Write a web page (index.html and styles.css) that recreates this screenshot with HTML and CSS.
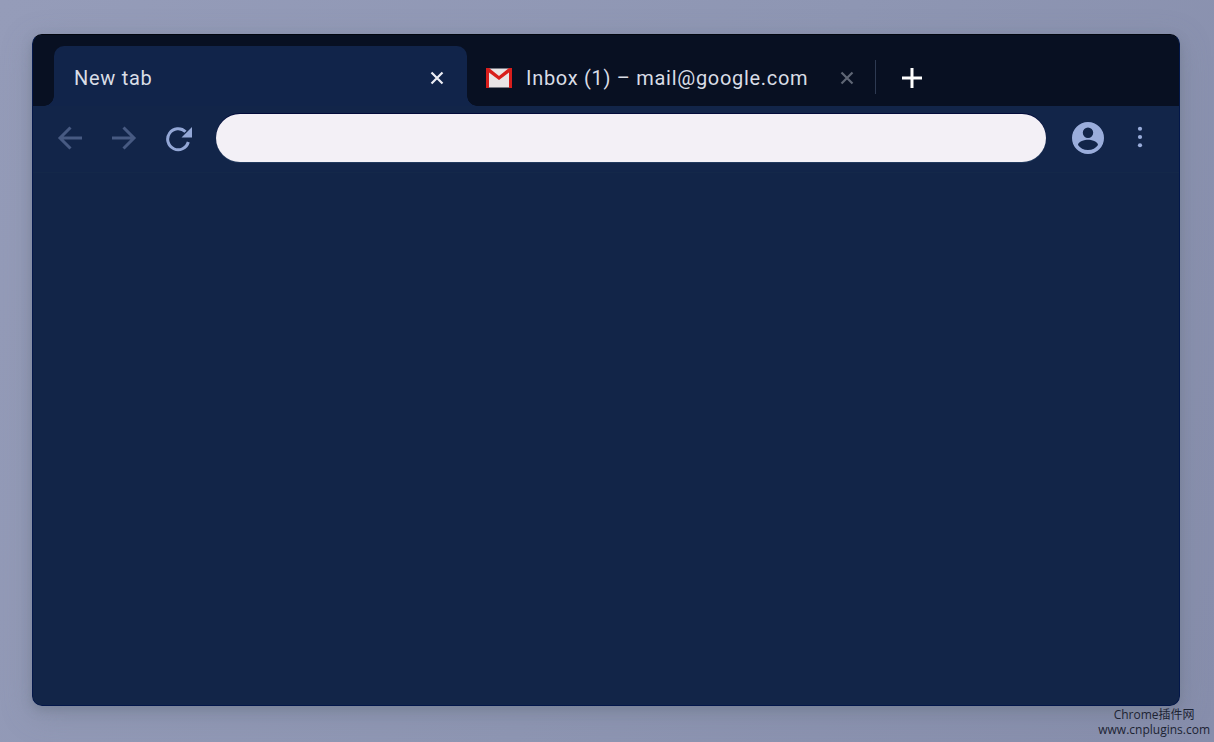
FILE: index.html
```html
<!DOCTYPE html>
<html lang="en">
<head>
<meta charset="utf-8">
<title>New tab</title>
<link rel="stylesheet" href="styles.css">
</head>
<body>
<main class="window">
  <header class="strip">
    <div class="tab tab-active">
      <span class="tab-title">New tab</span>
      <svg class="tab-close" viewBox="0 0 16 16"><path d="M2.500 2.500l11 11M13.500 2.500l-11 11"/></svg>
    </div>
    <div class="tab tab-idle">
      <svg class="gmail" viewBox="0 0 26 20">
        <rect x="0.500" y="0.500" width="25" height="19" fill="#e9e4e6"/>
        <path d="M0 0h3l10 8 10-8h3v20h-3V4.500l-10 7.500L3 4.500V20H0z" fill="#d81e1c"/>
      </svg>
      <span class="tab-title">Inbox (1) – mail@google.com</span>
      <svg class="tab-close tab-close-dim" viewBox="0 0 16 16"><path d="M2.500 2.500l11 11M13.500 2.500l-11 11"/></svg>
    </div>
    <span class="divider"></span>
    <svg class="plus" viewBox="0 0 22 22"><path d="M11 1v20M1 11h20"/></svg>
  </header>
  <nav class="toolbar">
    <svg class="icon icon-dim" viewBox="0 0 28 28"><path d="M26 14H4M14.500 3.500L4 14l10.500 10.500"/></svg>
    <svg class="icon icon-dim" viewBox="0 0 28 28"><path d="M2 14h22M13.500 3.500L24 14 13.500 24.500"/></svg>
    <svg class="icon icon-reload" viewBox="0 0 28 28"><path class="reload-arc" d="M24.300 18A10.500 10.500 0 1 1 21.500 7.700"/><path class="reload-head" d="M28 3v10.500H17.500z"/></svg>
    <div class="omnibox"></div>
    <svg class="account" viewBox="0 0 32 32"><path fill-rule="evenodd" d="M16 0a16 16 0 1 0 0 32 16 16 0 0 0 0-32zm0 5.500a5.200 5.200 0 1 1 0 10.400 5.200 5.200 0 0 1 0-10.400zm0 22.500c-4.300 0-8-2.100-10-5.100 0-3.300 6.700-5.100 10-5.100s10 1.800 10 5.100c-2 3-5.700 5.100-10 5.100z"/></svg>
    <svg class="dots" viewBox="0 0 6 24"><circle cx="3" cy="3" r="2.300"/><circle cx="3" cy="12" r="2.300"/><circle cx="3" cy="21" r="2.300"/></svg>
  </nav>
  <section class="page"></section>
</main>
<footer class="watermark">Chrome插件网<br>www.cnplugins.com</footer>
</body>
</html>
```
FILE: styles.css
```css
* { box-sizing: border-box; }
html, body { height: 100%; }
body {
  margin: 0;
  padding: 34px 34px 0 32px;
  overflow: hidden;
  background: linear-gradient(115deg, #959cb9 0%, #8e96b3 55%, #878eac 100%);
  font-family: Roboto, "Noto Sans", sans-serif;
}
.window {
  width: 1148px;
  height: 672px;
  display: flex;
  flex-direction: column;
  border-radius: 10px;
  overflow: hidden;
  background: #122548;
  border: 1px solid #03174a;
  border-top-color: #02060f;
}
body::before {
  content: "";
  position: absolute;
  left: 32px;
  top: 34px;
  width: 1148px;
  height: 672px;
  border-radius: 10px;
  box-shadow: 0 4px 10px rgba(110, 122, 140, .55), 0 8px 30px rgba(110, 118, 135, .35);
}
.strip {
  flex: none;
  height: 71px;
  display: flex;
  align-items: flex-end;
  padding-left: 21px;
  background: #081022;
}
.tab {
  height: 60px;
  display: flex;
  align-items: center;
  position: relative;
  color: #d9dde6;
  font-size: 20px;
  letter-spacing: .7px;
}
.tab-title { white-space: nowrap; }
.tab-active {
  width: 413px;
  padding: 4px 22px 0 20px;
  justify-content: space-between;
  background: #11244a;
  border-radius: 10px 10px 0 0;
}
.tab-active::before,
.tab-active::after {
  content: "";
  position: absolute;
  bottom: 0;
  width: 10px;
  height: 10px;
}
.tab-active::before {
  left: -10px;
  background: radial-gradient(circle at 0 0, transparent 9.500px, #11244a 10px);
}
.tab-active::after {
  right: -10px;
  background: radial-gradient(circle at 100% 0, transparent 9.500px, #11244a 10px);
}
.tab-close {
  flex: none;
  width: 16px;
  height: 16px;
  fill: none;
  stroke: #ecedf4;
  stroke-width: 2.200;
}
.tab-close-dim { stroke: #5f6675; margin-left: 31px; }
.tab-idle {
  width: 408px;
  padding: 4px 0 0 19px;
}
.gmail {
  flex: none;
  width: 26px;
  height: 20px;
  margin-right: 14px;
}
.divider {
  align-self: center;
  width: 1px;
  height: 34px;
  margin-top: 12px;
  background: #2e3a52;
}
.plus {
  align-self: center;
  width: 22px;
  height: 22px;
  margin: 14px 0 0 25px;
  fill: none;
  stroke: #fff;
  stroke-width: 3;
}
.toolbar {
  flex: none;
  height: 67px;
  display: flex;
  align-items: flex-start;
  padding: 8px 0 0 23px;
  background: #122549;
  border-bottom: 1px solid #142849;
}
.icon {
  flex: none;
  width: 28px;
  height: 28px;
  margin: 10px 26px 0 0;
  fill: none;
}
.icon-dim path {
  stroke: #475a82;
  stroke-width: 3;
}
.icon-reload { margin-right: 24px; }
.reload-arc { stroke: #93a7d6; stroke-width: 3; }
.reload-head { fill: #93a7d6; }
.omnibox {
  flex: none;
  width: 830px;
  height: 48px;
  border-radius: 24px;
  background: #f3f0f6;
  box-shadow: 0 -1px 0 #020b3a, 0 1px 0 #223a5e;
}
.account {
  flex: none;
  width: 32px;
  height: 32px;
  margin: 8px 0 0 26px;
  fill: #9aaddb;
}
.dots {
  flex: none;
  width: 6px;
  height: 22px;
  margin: 12px 0 0 33px;
  fill: #9aaddb;
}
.page {
  flex: 1;
  background: #122548;
}
.watermark {
  position: absolute;
  right: 4px;
  bottom: 5px;
  font-family: "Open Sans", "Noto Sans CJK SC", sans-serif;
  font-size: 12px;
  line-height: 15px;
  text-align: center;
  color: #1c2333;
}
```
